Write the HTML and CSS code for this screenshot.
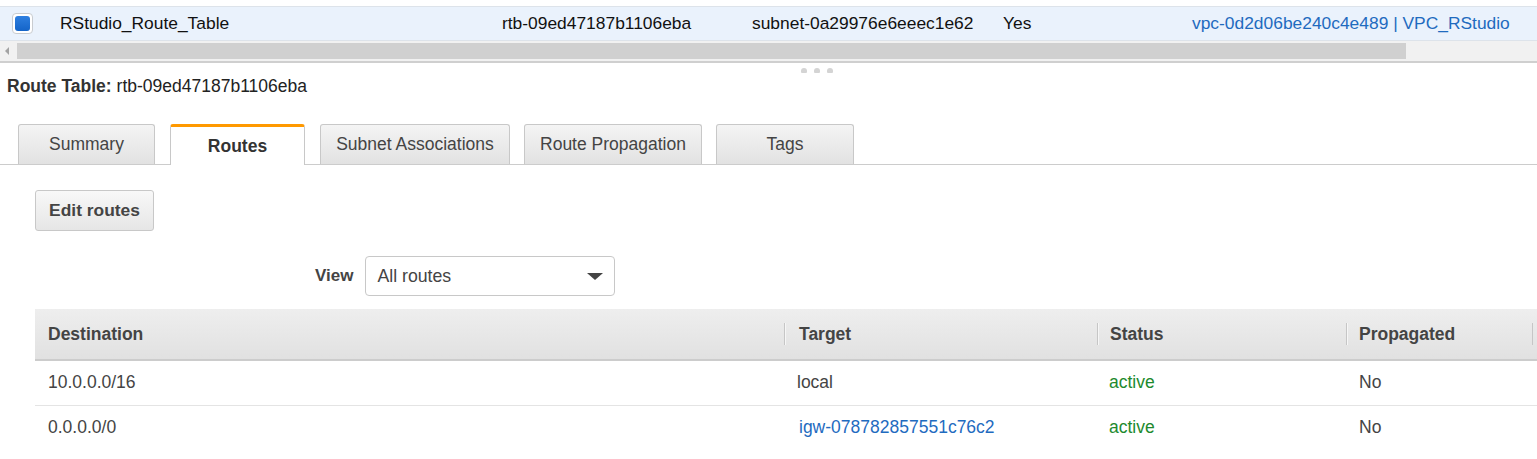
FILE: index.html
```html
<!DOCTYPE html>
<html>
<head>
<meta charset="utf-8">
<link rel="stylesheet" href="styles.css">
</head>
<body>
<div class="list">
  <div class="list-row">
    <div class="cell cb-cell"><span class="checkbox"></span></div>
    <div class="cell">RStudio_Route_Table</div>
    <div class="cell">rtb-09ed47187b1106eba</div>
    <div class="cell">subnet-0a29976e6eeec1e62</div>
    <div class="cell">Yes</div>
    <div class="cell link">vpc-0d2d06be240c4e489 | VPC_RStudio</div>
  </div>
  <div class="hscroll">
    <span class="arrow"></span>
    <div class="thumb"></div>
  </div>
</div>
<div class="splitter"><span class="dot"></span><span class="dot"></span><span class="dot"></span></div>
<div class="detail-title"><b>Route Table:</b> rtb-09ed47187b1106eba</div>
<div class="tabs">
  <div class="tab t-summary">Summary</div>
  <div class="tab active t-routes">Routes</div>
  <div class="tab t-subnet">Subnet Associations</div>
  <div class="tab t-prop">Route Propagation</div>
  <div class="tab t-tags">Tags</div>
</div>
<div class="panel">
  <button class="btn">Edit routes</button>
  <div class="view-row">
    <span class="view-label">View</span>
    <div class="select"><span>All routes</span><span class="caret"></span></div>
  </div>
  <table class="routes">
    <colgroup><col class="c1"><col class="c2"><col class="c3"><col class="c4"></colgroup>
    <thead>
      <tr><th>Destination</th><th class="sep tgt-h">Target</th><th class="sep">Status</th><th class="sep end">Propagated</th></tr>
    </thead>
    <tbody>
      <tr><td>10.0.0.0/16</td><td class="tgt">local</td><td class="ok">active</td><td>No</td></tr>
      <tr><td>0.0.0.0/0</td><td class="tgt"><span class="link igw">igw-078782857551c76c2</span></td><td class="ok">active</td><td>No</td></tr>
    </tbody>
  </table>
</div>
</body>
</html>
```

FILE: styles.css
```css
* { box-sizing: border-box; }
html, body { margin: 0; padding: 0; background: #fff; }
body {
  font-family: "Liberation Sans", Arial, sans-serif;
  color: #16191f;
  width: 1537px;
  overflow: hidden;
}
.list { padding-top: 6px; }
.list-row {
  display: grid;
  grid-template-columns: 60px 442px 250px 251px 189px 1fr;
  align-items: center;
  height: 35px;
  background: #eaf2fc;
  border-top: 1px solid #dde3ea;
  border-bottom: 1px solid #dde3ea;
  font-size: 17.4px;
  color: #111;
}
.cell { white-space: nowrap; }
.cb-cell { padding-left: 12px; display: flex; align-items: center; }
.checkbox {
  width: 21px; height: 21px;
  border-radius: 4px;
  border: 1px solid #c9ccd0;
  background: #fff;
  padding: 2px;
  display: block;
}
.checkbox::after {
  content: "";
  display: block;
  width: 15px; height: 15px;
  border-radius: 3px;
  background: linear-gradient(#2e7fe0, #1464c8);
}
.link { color: #1f6bbf; }
.hscroll {
  height: 22px;
  background: #f1f1f1;
  display: flex;
  align-items: center;
  border-bottom: 2px solid #cfcfcf;
}
.arrow {
  width: 0; height: 0;
  margin-left: 5px; margin-right: 8px;
  border-top: 4px solid transparent;
  border-bottom: 4px solid transparent;
  border-right: 4px solid #a3a3a3;
}
.thumb {
  width: 1389px;
  height: 16px;
  background: #d0d0d0;
}
.splitter {
  display: flex;
  gap: 7px;
  padding-top: 5px;
  height: 12px;
  padding-left: 801px;
}
.dot {
  width: 6px; height: 5px;
  border-radius: 3px 3px 1px 1px;
  background: #d4d4d4;
}
.detail-title {
  font-size: 17.5px;
  color: #222;
  padding: 1px 0 0 7px;
  height: 49px;
}
.detail-title b { color: #333; }
.tabs {
  display: flex;
  align-items: flex-end;
  padding-left: 18px;
  height: 41px;
  border-bottom: 1px solid #ccc;
  gap: 15px;
}
.tab {
  height: 40px;
  border: 1px solid #c8c8c8;
  border-bottom: none;
  border-radius: 3px 3px 0 0;
  background: linear-gradient(#f4f4f4, #e2e2e2);
  font-size: 17.5px;
  color: #444;
  display: flex;
  align-items: center;
  justify-content: center;
  padding-bottom: 1px;
}
.tab.active {
  background: #fff;
  border-top: 3px solid #ff9900;
  height: 41px;
  margin-bottom: -1px;
  font-weight: bold;
  color: #333;
  padding-top: 2px;
}
.t-summary { width: 137px; }
.t-routes { width: 135px; }
.t-subnet { width: 190px; margin-right: -1px; }
.t-prop { width: 178px; margin-right: -1px; }
.t-tags { width: 138px; }
.panel { padding: 25px 0 0 35px; }
.btn {
  display: block;
  width: 119px; height: 41px;
  border: 1px solid #c8c8c8;
  border-radius: 3px;
  background: linear-gradient(#f8f8f8, #e6e6e6);
  font-family: "Liberation Sans", Arial, sans-serif;
  font-size: 17.4px;
  font-weight: bold;
  color: #444;
  padding: 0;
}
.view-row {
  display: flex;
  align-items: center;
  margin-top: 25px;
  padding-left: 280px;
  gap: 12px;
}
.view-label { font-size: 17px; font-weight: bold; color: #444; }
.select {
  width: 250px; height: 40px;
  border: 1px solid #c8c8c8;
  border-radius: 4px;
  display: flex;
  align-items: center;
  justify-content: space-between;
  padding: 0 11px 0 11px;
  font-size: 17.7px;
  color: #444;
}
.caret {
  width: 0; height: 0;
  border-left: 8px solid transparent;
  border-right: 8px solid transparent;
  border-top: 7px solid #444;
}
.routes {
  margin-top: 13px;
  width: 1502px;
  table-layout: fixed;
  border-collapse: collapse;
  font-size: 17.5px;
}
.c1 { width: 749px; } .c2 { width: 313px; } .c3 { width: 249px; } .c4 { width: 191px; }
.routes th {
  height: 51px;
  text-align: left;
  font-weight: bold;
  color: #444;
  background: linear-gradient(#eeeeee, #e1e1e1);
  border-bottom: 2px solid #cccccc;
  padding: 0 0 0 13px;
  position: relative;
}
.routes th.tgt-h { padding-left: 15px; }
.routes th.sep::before {
  content: "";
  position: absolute;
  left: 0; top: 14px; bottom: 14px;
  width: 1px;
  background: #c6c6c6;
  box-shadow: 1px 0 0 #f6f6f6;
}
.routes th.end::after {
  content: "";
  position: absolute;
  right: 4px; top: 14px; bottom: 14px;
  width: 1px;
  background: #c6c6c6;
}
.routes td {
  height: 45px;
  padding: 0 0 0 13px;
  color: #444;
  border-bottom: 1px solid #e4e4e4;
}
.routes tbody tr:last-child td { border-bottom: none; }
.routes td.ok { padding-left: 12px; color: #1d8a2e; }
.igw { padding-left: 2px; }
```
